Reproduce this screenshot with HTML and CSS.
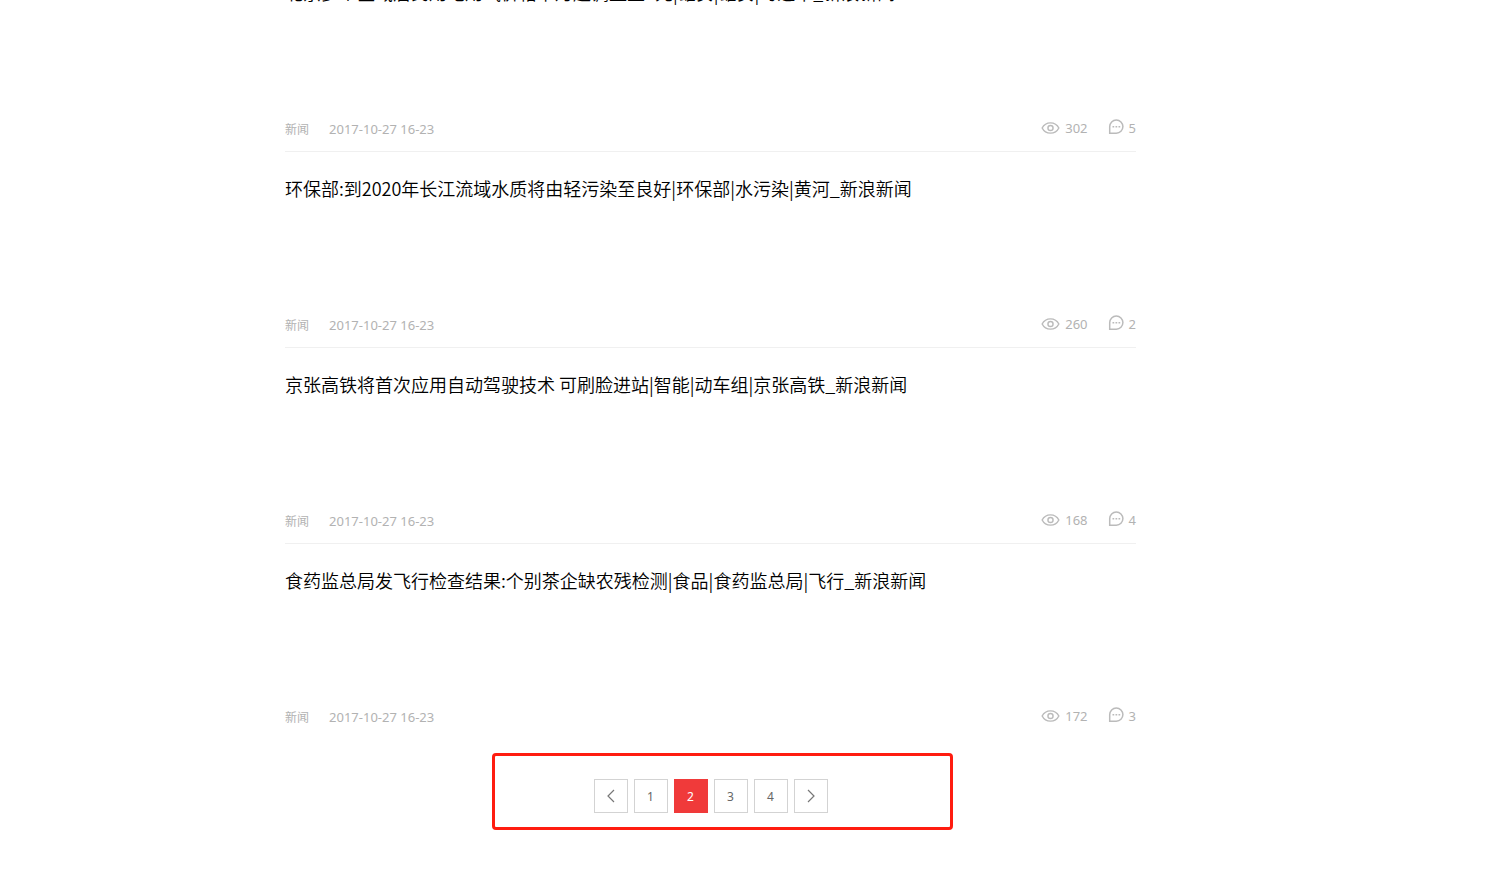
FILE: index.html
```html
<!DOCTYPE html>
<html lang="zh-CN">
<head>
<meta charset="utf-8">
<meta name="viewport" content="width=device-width, initial-scale=1">
<title>新闻</title>
<link rel="stylesheet" href="styles.css">
</head>
<body>
<svg class="sprite" aria-hidden="true">
  <symbol id="eye" viewBox="0 0 20 14">
    <path d="M1.200 7C3 3.500 6.200 1.600 10 1.600S17 3.500 18.800 7C17 10.500 13.800 12.400 10 12.400S3 10.500 1.200 7Z"/>
    <circle cx="10" cy="7" r="2.700"/>
  </symbol>
  <symbol id="comment" viewBox="0 0 16 16">
    <path d="M1.700 14.200V7.600A6.600 6.600 0 1 1 8.300 14.200Z"/>
    <path d="M4.500 7.700h1.700M7.500 7.700h1.700M10.500 7.700h1.700"/>
  </symbol>
</svg>
<main class="page">
  <ul class="news-list">
    <li class="news-item">
      <h2 class="news-title"><a href="#">北京多个区域居民用电用气价格下月起调整至8元|雄安|雄安|习近平_新浪新闻</a></h2>
      <div class="meta">
        <span class="category">新闻</span><time class="date">2017-10-27 16-23</time>
        <span class="stat views"><svg class="eye"><use href="#eye"/></svg>302</span>
        <span class="stat"><svg class="comment"><use href="#comment"/></svg>5</span>
      </div>
    </li>
    <li class="news-item">
      <h2 class="news-title"><a href="#">环保部:到2020年长江流域水质将由轻污染至良好|环保部|水污染|黄河_新浪新闻</a></h2>
      <div class="meta">
        <span class="category">新闻</span><time class="date">2017-10-27 16-23</time>
        <span class="stat views"><svg class="eye"><use href="#eye"/></svg>260</span>
        <span class="stat"><svg class="comment"><use href="#comment"/></svg>2</span>
      </div>
    </li>
    <li class="news-item">
      <h2 class="news-title"><a href="#">京张高铁将首次应用自动驾驶技术 可刷脸进站|智能|动车组|京张高铁_新浪新闻</a></h2>
      <div class="meta">
        <span class="category">新闻</span><time class="date">2017-10-27 16-23</time>
        <span class="stat views"><svg class="eye"><use href="#eye"/></svg>168</span>
        <span class="stat"><svg class="comment"><use href="#comment"/></svg>4</span>
      </div>
    </li>
    <li class="news-item">
      <h2 class="news-title"><a href="#">食药监总局发飞行检查结果:个别茶企缺农残检测|食品|食药监总局|飞行_新浪新闻</a></h2>
      <div class="meta">
        <span class="category">新闻</span><time class="date">2017-10-27 16-23</time>
        <span class="stat views"><svg class="eye"><use href="#eye"/></svg>172</span>
        <span class="stat"><svg class="comment"><use href="#comment"/></svg>3</span>
      </div>
    </li>
  </ul>
  <nav class="pager" aria-label="分页">
    <button class="page-button" aria-label="上一页"><svg class="arrow" viewBox="0 0 10 14"><path d="M8 1 2 7l6 6"/></svg></button>
    <button class="page-button">1</button>
    <button class="page-button current" aria-current="page">2</button>
    <button class="page-button">3</button>
    <button class="page-button">4</button>
    <button class="page-button" aria-label="下一页"><svg class="arrow" viewBox="0 0 10 14"><path d="m2 1 6 6-6 6"/></svg></button>
    <div class="highlight"></div>
  </nav>
</main>
</body>
</html>
```
FILE: styles.css
```css
* {
  box-sizing: border-box;
}

body {
  margin: 0;
  overflow: hidden;
  background: #fff;
  color: #000;
  font-family: "Noto Sans", "Noto Sans CJK SC", sans-serif;
}

.sprite {
  position: absolute;
  width: 0;
  height: 0;
}

.page {
  max-width: 920px;
  margin: 0 auto;
  padding-right: 69px;
}

/* The list is scrolled part of the way past its first entry */
.news-list {
  margin: -44px 0 0;
  padding: 0;
  list-style: none;
}

.news-item {
  display: flex;
  flex-direction: column;
  justify-content: space-between;
  min-height: 196px;
  padding: 23px 0 12px;
  border-bottom: 1px solid #f0f0f0;
}

.news-item:last-child {
  border-bottom-color: transparent;
}

.news-title {
  margin: 0;
  font-family: "Noto Sans CJK SC", sans-serif;
  font-size: 18px;
  font-weight: 350;
  line-height: 26px;
}

.news-title a {
  color: inherit;
  text-decoration: none;
}

.meta {
  display: flex;
  align-items: center;
  height: 20px;
  color: #b2b2b2;
  font-size: 13px;
  line-height: 20px;
}

.category {
  margin-right: 20px;
  padding-top: 2px;
  font-size: 12px;
}

.stat {
  display: flex;
  align-items: center;
  gap: 5px;
  padding-bottom: 2px;
}

.views {
  margin-left: auto;
  margin-right: 20px;
}

.eye,
.comment {
  fill: none;
  stroke: #bbb;
  stroke-width: 1.5;
}

.eye {
  width: 19px;
  height: 14px;
}

.comment {
  width: 16px;
  height: 16px;
  margin-bottom: 2px;
}

.pager {
  position: relative;
  display: flex;
  justify-content: center;
  gap: 6px;
  padding: 39px 0 67px;
}

.page-button {
  display: flex;
  align-items: center;
  justify-content: center;
  width: 34px;
  height: 34px;
  padding: 0;
  border: 1px solid #d3d3d3;
  background: #fff;
  color: #666;
  font-family: inherit;
  font-size: 12px;
}

.current {
  border-color: #f03a3a;
  background: #f03a3a;
  color: #fff;
}

.arrow {
  width: 10px;
  height: 14px;
  fill: none;
  stroke: #777;
  stroke-width: 1.2;
}

.highlight {
  position: absolute;
  inset: 13px 183px 50px 207px;
  border: 3px solid #ff1c10;
  border-radius: 4px;
  pointer-events: none;
}
```
